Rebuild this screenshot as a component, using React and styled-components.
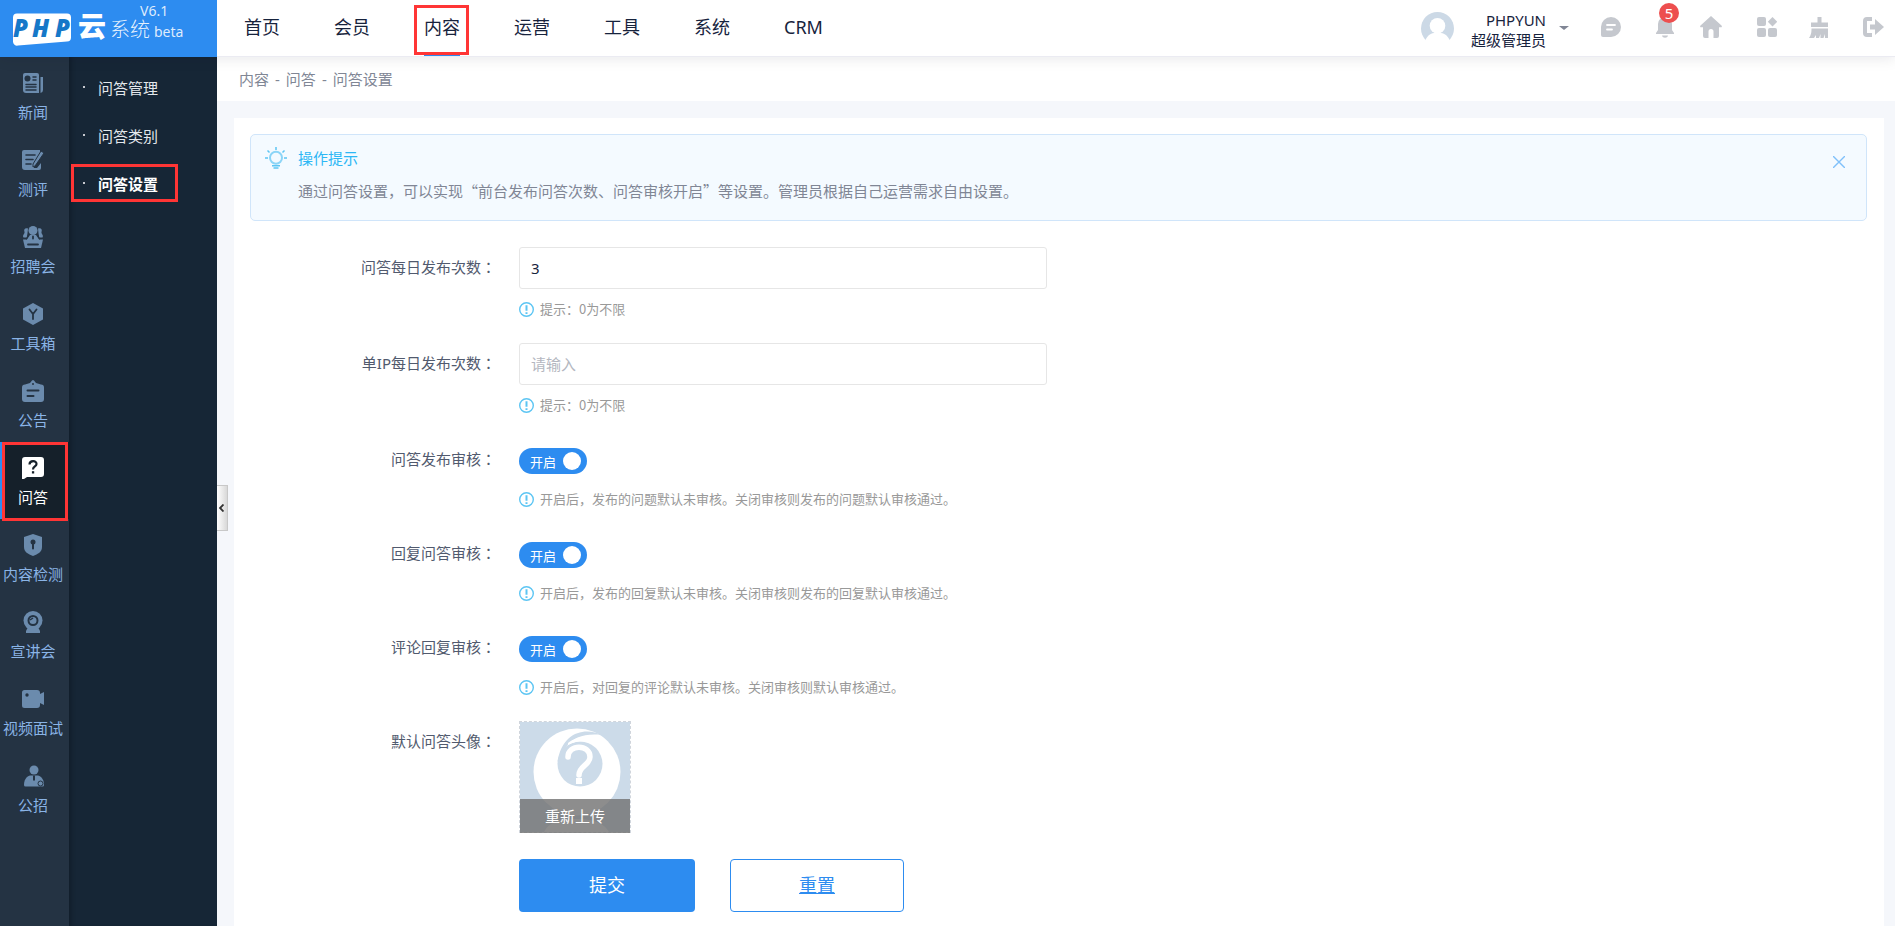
import React, { useState } from "react";
import styled, { createGlobalStyle, css } from "styled-components";

const sans = `"Noto Sans", "Noto Sans CJK SC", sans-serif`;
const cjk = `"Noto Sans CJK SC", "Noto Sans", sans-serif`;
// the TC face centres the full-width colon
const labelFont = `"Noto Sans", "Noto Sans CJK TC", sans-serif`;

const topMenu = ["首页", "会员", "内容", "运营", "工具", "系统", "CRM"];

const subMenu = ["问答管理", "问答类别", "问答设置"];

const crumbs = ["内容", "-", "问答", "-", "问答设置"];

const railMenu = [
  { name: "新闻", icon: "news" },
  { name: "测评", icon: "exam" },
  { name: "招聘会", icon: "fair" },
  { name: "工具箱", icon: "box" },
  { name: "公告", icon: "notice" },
  { name: "问答", icon: "ask" },
  { name: "内容检测", icon: "shield" },
  { name: "宣讲会", icon: "camera" },
  { name: "视频面试", icon: "video" },
  { name: "公招", icon: "person" },
];

const switches = [
  {
    id: "askCheck",
    label: "问答发布审核：",
    hint: "开启后，发布的问题默认未审核。关闭审核则发布的问题默认审核通过。",
  },
  {
    id: "answerCheck",
    label: "回复问答审核：",
    hint: "开启后，发布的回复默认未审核。关闭审核则发布的回复默认审核通过。",
  },
  {
    id: "commentCheck",
    label: "评论回复审核：",
    hint: "开启后，对回复的评论默认未审核。关闭审核则默认审核通过。",
  },
];

// icons of the left rail, "hole" is the colour behind the icon
const RailIcon = ({ type, hole }) => {
  const line = { stroke: hole, strokeWidth: 2, fill: "none", strokeLinecap: "round" };
  const shapes = {
    news: (
      <>
        <path d="M3 1h12a2 2 0 0 1 2 2v18H4a3 3 0 0 1-3-3V3a2 2 0 0 1 2-2z" />
        <path d="M18.500 5H21v13a3 3 0 0 1-2.500 3z" />
        <circle cx="5.500" cy="6.500" r="3" fill={hole} />
        <path {...line} strokeWidth="1.500" d="M11 5h3M11 8h3M4 12.500h10M4 15h10M4 18h10" />
      </>
    ),
    exam: (
      <>
        <path d="M2 1h16v7l-6 8v3h3l4-5v5a2 2 0 0 1-2 2H3a3 3 0 0 1-3-3V3a2 2 0 0 1 2-2z" />
        <path d="M19 2l3 2-9 13-2 1 0-3z" stroke={hole} strokeWidth="1" />
        <path {...line} strokeWidth="1.600" d="M4 6h9M4 10.500h7M4 15h5" />
      </>
    ),
    fair: (
      <>
        <path d="M6 2.500c-3-1-4.500 1-3.500 3.500C3 8 0 9 1.500 11.500H5zM16 2.500c3-1 4.500 1 3.500 3.500-.5 2 2.500 3 1 5.500H17z" />
        <circle cx="11" cy="4.500" r="4.500" />
        <path d="M8 9h6l3.500 5h-13z" />
        <path d="M1 13.500h20L19 22H3z" />
        <path {...line} strokeWidth="1.200" d="M6.500 8.500L4.500 13M15.500 8.500l2 4.500" />
        <path {...line} strokeWidth="1.800" d="M11 10.500v2M6 18.500h10" />
      </>
    ),
    box: (
      <>
        <path d="M11 0l10 5.500v11L11 22 1 16.500v-11z" />
        <path {...line} strokeWidth="1.800" d="M7.500 6.500L11 11l3.500-4.500M11 11v5" />
      </>
    ),
    notice: (
      <>
        <path d="M8 3l2-2.500a1.500 1.500 0 0 1 2 0L14 3l5 1.500a3 3 0 0 1 3 3V19a3 3 0 0 1-3 3H3a3 3 0 0 1-3-3V7.500a3 3 0 0 1 3-3z" />
        <path {...line} d="M5.500 10.500h11M5.500 16h6" />
        <circle cx="11" cy="4" r="1" fill={hole} />
      </>
    ),
    ask: (
      <>
        <path d="M3 0h16a3 3 0 0 1 3 3v14a3 3 0 0 1-3 3H5l-3 2H0V3a3 3 0 0 1 3-3z" />
        <path {...line} strokeWidth="2.200" strokeLinecap="butt" d="M7.500 7.500C7.500 3 14.800 3 14.500 7c0 2.500-3.500 2.500-3.500 5.500" />
        <rect x="9.900" y="14.200" width="2.300" height="2.300" fill={hole} />
      </>
    ),
    shield: (
      <>
        <path d="M11 0l9 3v10c0 5-4 7-9 9-5-2-9-4-9-9V3z" />
        <circle cx="11" cy="8" r="2.500" fill={hole} />
        <path {...line} d="M11 8v6.500" />
      </>
    ),
    camera: (
      <>
        <circle cx="11" cy="9.500" r="9.500" />
        <path d="M6 16h10l2 4v2H4v-2z" />
        <circle cx="11" cy="9.500" r="4.500" fill="none" stroke={hole} strokeWidth="2" />
        <path d="M8 9l3-2" stroke={hole} strokeWidth="1.500" />
      </>
    ),
    video: (
      <>
        <path d="M2.500 2H15a3 3 0 0 1 3 3v1l4-2v13l-4-2v2a3 3 0 0 1-3 3H2.500A2.500 2.500 0 0 1 0 17.500v-13A2.500 2.500 0 0 1 2.500 2z" />
        <circle cx="5" cy="7" r="1.700" fill={hole} />
      </>
    ),
    person: (
      <>
        <circle cx="12" cy="5" r="4.500" />
        <path d="M8 10.500h8c4 1 6 5 6 9.500a1.500 1.500 0 0 1-1.500 1.500h-17A1.500 1.500 0 0 1 2 20c0-4.500 2-8.500 6-9.500z" />
        <path {...line} strokeLinecap="butt" d="M12 10.500v5" />
        <circle cx="18.500" cy="18.500" r="2.500" fill="none" stroke={hole} strokeWidth="1" />
      </>
    ),
  };
  return (
    <svg width="22" height="22" viewBox="0 0 22 22" fill="currentColor" aria-hidden="true">
      {shapes[type]}
    </svg>
  );
};

const ChatIcon = () => (
  <svg width="20" height="20" viewBox="0 0 20 20" fill="currentColor">
    <path d="M10 0a10 10 0 0 1 0 20H2a2 2 0 0 1-2-2v-8A10 10 0 0 1 10 0z" />
    <path d="M6 8h8M6 12.500h5" stroke="#fff" strokeWidth="1.800" strokeLinecap="round" />
  </svg>
);

const BellIcon = () => (
  <svg width="18" height="22" viewBox="0 0 18 22" fill="currentColor">
    <path d="M9 1a7 7 0 0 1 7 7v6l2 3v1H0v-1l2-3V8a7 7 0 0 1 7-7z" />
    <path d="M6 19.500h6c-.5 3-5.500 3-6 0z" />
  </svg>
);

const HomeIcon = () => (
  <svg width="22" height="22" viewBox="0 0 22 22" fill="currentColor">
    <path d="M11 0l10.500 9.500c.8.900.3 1.800-.8 1.800H19V20a2 2 0 0 1-2 2h-3.500v-6.500a2.500 2.500 0 0 0-5 0V22H5a2 2 0 0 1-2-2v-8.700H1.300C.2 11.300-.3 10.400.5 9.500z" />
  </svg>
);

const GridIcon = () => (
  <svg width="20" height="20" viewBox="0 0 20 20" fill="currentColor">
    <rect width="9" height="9" rx="2" />
    <rect y="11" width="9" height="9" rx="2" />
    <rect x="11" y="11" width="9" height="9" rx="2" />
    <path d="M15.500 0L20.200 4.700 15.500 9.400 10.800 4.700z" strokeLinejoin="round" />
  </svg>
);

const BroomIcon = () => (
  <svg width="20" height="22" viewBox="0 0 20 22" fill="currentColor">
    <path d="M8.500 1h4v5.500H19V11H2V6.500h6.500z" />
    <path d="M2.500 12.500H19V22h-3v-4l-1.500 4h-3v-4L10 22H7v-3l-2 3H0c2-3 2.500-5 2.500-9.500z" />
  </svg>
);

const LogoutIcon = () => (
  <svg width="21" height="20" viewBox="0 0 21 20" fill="none">
    <path d="M9 2H4a2 2 0 0 0-2 2v12a2 2 0 0 0 2 2h5" stroke="currentColor" strokeWidth="4" />
    <path d="M7 7.500h5V2l9 8-9 8v-5.500H7z" fill="currentColor" />
  </svg>
);

// $gap is the space to the tool on the left
const tools = [
  { name: "消息", Icon: ChatIcon, gap: 32 },
  { name: "通知", Icon: BellIcon, gap: 35, badge: 5 },
  { name: "主页", Icon: HomeIcon, gap: 26 },
  { name: "应用", Icon: GridIcon, gap: 35 },
  { name: "清理", Icon: BroomIcon, gap: 32 },
  { name: "退出", Icon: LogoutIcon, gap: 34 },
];

const Logo = () => (
  <svg width="217" height="57" viewBox="0 0 217 57" role="img" aria-label="PHP云系统">
    <path d="M17 13.500h50a4 4 0 0 1 4 4v20a4 4 0 0 1-4 4l-49 4a4 4 0 0 1-5-4V17.500a4 4 0 0 1 4-4z" fill="#fff" />
    <g fill="#1678c8" fontFamily="Noto Sans" fontWeight="900" fontStyle="italic" fontSize="24">
      <text x="13" y="37">P</text>
      <text x="32" y="37">H</text>
      <text x="55" y="37">P</text>
    </g>
    <g fill="#fff" fontFamily="Noto Sans CJK SC">
      <text x="78" y="37" fontSize="28" fontWeight="900">云</text>
      <text x="110" y="37" fontSize="20" fontWeight="300" fillOpacity="0.900">系统</text>
    </g>
    <g fill="#fff" fillOpacity="0.850" fontFamily="Noto Sans" fontSize="14">
      <text x="140" y="16">V6.1</text>
      <text x="154" y="37">beta</text>
    </g>
  </svg>
);

const HintIcon = () => (
  <svg width="15" height="15" viewBox="0 0 15 15" fill="none" stroke="#5cc5f3">
    <circle cx="7.500" cy="7.500" r="6.800" strokeWidth="1.400" />
    <path d="M7.500 3.200v5.600M7.500 10.200v1.800" strokeWidth="2" />
  </svg>
);

const BulbIcon = () => (
  <svg width="22" height="22" viewBox="0 0 22 22" fill="none" stroke="#5cc5f3" strokeWidth="1.500">
    <circle cx="11" cy="10.800" r="6" stroke="#8cd5f7" strokeWidth="2" />
    <path d="M11 0v3M0 11h3M19 11h3M2.500 3.500l2 2M19.500 3.500l-2 2M7 18.700h8M8.500 21h5" />
  </svg>
);

const Avatar = () => (
  <svg width="33" height="33" viewBox="0 0 33 33">
    <circle cx="16.500" cy="16.500" r="16.500" fill="#ccd9e6" />
    <path d="M4 29c2-5 5-7.500 9-8h7c4 .5 7 3 9 8l2 4H2z" fill="#fff" />
    <circle cx="16.500" cy="13.800" r="7.800" fill="#fff" />
  </svg>
);

const AskPicture = () => (
  <svg width="110" height="110" viewBox="0 0 110 110">
    <rect width="110" height="110" fill="#ccdbe9" />
    <circle cx="57" cy="50" r="43.500" fill="#fff" />
    <circle cx="60" cy="42" r="22.500" fill="#ccdbe9" />
    <path d="M82 13C66 5 42 9 37.500 40L46 25C53 15 66 11 82 13z" fill="#ccdbe9" />
    <path d="M48 21c6-5 16-8 25-5l-1 5c-8-3-17-2-24 2z" fill="#fff" />
    <path
      d="M48 35c0-13 22-13 22 0 0 8-11 9-11 18"
      fill="none"
      stroke="#fff"
      strokeWidth="5.500"
      strokeLinecap="round"
    />
    <rect x="56" y="56" width="6" height="6" fill="#fff" />
    <path d="M24 110c4-8 12-13 32-13s28 5 33 13z" fill="#fff" />
  </svg>
);

const App = () => {
  const [dayNum, setDayNum] = useState("3");
  const [ipNum, setIpNum] = useState("");
  const [checks, setChecks] = useState({ askCheck: true, answerCheck: true, commentCheck: true });
  const [tipOpen, setTipOpen] = useState(true);

  const toggleCheck = (id) => {
    setChecks({ ...checks, [id]: !checks[id] });
  };

  const resetForm = (e) => {
    e.preventDefault();
    setDayNum("3");
    setIpNum("");
    setChecks({ askCheck: true, answerCheck: true, commentCheck: true });
  };

  return (
    <Page>
      <GlobalStyle />
      <Header>
        <Logo />
        <TopBar>
          <TopNav>
            {topMenu.map((item) => (
              <TopLink key={item} href="#" $active={item === "内容"}>
                {item}
              </TopLink>
            ))}
          </TopNav>
          <UserButton type="button">
            <Avatar />
            <UserName>
              <span>PHPYUN</span>
              <span>超级管理员</span>
            </UserName>
            <Caret />
          </UserButton>
          {tools.map(({ name, Icon, gap, badge }) => (
            <ToolButton key={name} type="button" aria-label={name} $gap={gap}>
              <Icon />
              {badge && <Badge>{badge}</Badge>}
            </ToolButton>
          ))}
        </TopBar>
      </Header>

      <Body>
        <Rail>
          {railMenu.map(({ name, icon }) => (
            <RailLink key={name} href="#" $active={name === "问答"}>
              <RailIcon type={icon} hole={name === "问答" ? "#15202a" : "#243343"} />
              {name}
            </RailLink>
          ))}
        </Rail>
        <SubNav>
          {subMenu.map((item) => (
            <SubLink key={item} href="#" $active={item === "问答设置"}>
              {item}
            </SubLink>
          ))}
          <FoldButton type="button" aria-label="收起菜单">
            <svg width="5" height="8" viewBox="0 0 5 8" fill="none" stroke="#333" strokeWidth="1.800">
              <path d="M4.500 .5L1 4l3.500 3.500" />
            </svg>
          </FoldButton>
        </SubNav>

        <Main>
          <Breadcrumb>
            {crumbs.map((text, i) => (
              <span key={i}>{text}</span>
            ))}
          </Breadcrumb>
          <Card>
            {tipOpen && (
              <Tip>
                <BulbIcon />
                <TipText>
                  <h2>操作提示</h2>
                  <p>通过问答设置，可以实现“前台发布问答次数、问答审核开启”等设置。管理员根据自己运营需求自由设置。</p>
                </TipText>
                <CloseButton type="button" aria-label="关闭" onClick={() => setTipOpen(false)}>
                  <svg width="12" height="12" viewBox="0 0 12 12" stroke="#7fc0fa" strokeWidth="1.400">
                    <path d="M0 0l12 12M12 0L0 12" />
                  </svg>
                </CloseButton>
              </Tip>
            )}
            <form onSubmit={(e) => e.preventDefault()} onReset={resetForm}>
              <Row>
                <Label htmlFor="dayNum">问答每日发布次数：</Label>
                <Field>
                  <Input id="dayNum" placeholder="请输入" value={dayNum} onChange={(e) => setDayNum(e.target.value)} />
                  <Hint>
                    <HintIcon />
                    提示：0为不限
                  </Hint>
                </Field>
              </Row>
              <Row>
                <Label htmlFor="ipNum">单IP每日发布次数：</Label>
                <Field>
                  <Input id="ipNum" placeholder="请输入" value={ipNum} onChange={(e) => setIpNum(e.target.value)} />
                  <Hint>
                    <HintIcon />
                    提示：0为不限
                  </Hint>
                </Field>
              </Row>
              {switches.map(({ id, label, hint }) => (
                <Row key={id}>
                  <Label htmlFor={id}>{label}</Label>
                  <SwitchField>
                    <Switch $on={checks[id]}>
                      <input type="checkbox" id={id} checked={checks[id]} onChange={() => toggleCheck(id)} />
                      {checks[id] ? "开启" : "关闭"}
                      <Knob />
                    </Switch>
                    <Hint>
                      <HintIcon />
                      {hint}
                    </Hint>
                  </SwitchField>
                </Row>
              ))}
              <Row>
                <Label as="span">默认问答头像：</Label>
                <Upload type="button">
                  <AskPicture />
                  <UploadText>重新上传</UploadText>
                </Upload>
              </Row>
              <Actions>
                <Submit type="submit">提交</Submit>
                <Reset type="reset">重置</Reset>
              </Actions>
            </form>
          </Card>
        </Main>
      </Body>
    </Page>
  );
};

const GlobalStyle = createGlobalStyle`
  *, *::before, *::after {
    box-sizing: border-box;
  }
  body {
    margin: 0;
    background: #f5f7fb;
    font-family: ${cjk};
    font-size: 15px;
  }
  h2, p {
    margin: 0;
    font-size: 15px;
    font-weight: 400;
  }
  a {
    text-decoration: none;
  }
  button, input {
    font-family: inherit;
    font-size: 15px;
  }
  button {
    border: none;
    padding: 0;
    background: none;
    cursor: pointer;
  }
  svg {
    display: block;
    flex: none;
  }
`;

// red frame round the marked menu entries
const marked = css`
  position: relative;
  &::after {
    content: "";
    position: absolute;
    border: 3px solid #ff3535;
  }
`;

const Page = styled.div`
  min-height: 100vh;
  display: flex;
  flex-direction: column;
`;

const Header = styled.header`
  position: relative;
  z-index: 2;
  display: flex;
  background: #2d8cf0;
  box-shadow: 0 1px 14px rgba(0, 21, 41, 0.1);
`;

const TopBar = styled.div`
  flex: 1;
  display: flex;
  align-items: center;
  height: 57px;
  padding: 0 11px 0 27px;
  background: #fff;
  border-bottom: 1px solid #ebebf2;
`;

const TopNav = styled.nav`
  flex: 1;
  display: flex;
  gap: 54px;
`;

const TopLink = styled.a`
  height: 56px;
  line-height: 54px;
  font-family: ${sans};
  font-size: 18px;
  color: #17233d;
  ${({ $active }) =>
    $active &&
    css`
      ${marked}
      border-bottom: 2px solid #2d8cf0;
      &::after {
        inset: 5px -9px -1px -10px;
      }
    `}
`;

const UserButton = styled.button`
  display: flex;
  align-items: center;
  font-family: ${sans};
  color: #17233d;
`;

const UserName = styled.span`
  display: flex;
  flex-direction: column;
  margin: 4px 13px 0 17px;
  text-align: right;
  line-height: 20px;
`;

const Caret = styled.span`
  border: 5px solid transparent;
  border-bottom: none;
  border-top: 4px solid #808695;
`;

const ToolButton = styled.button`
  position: relative;
  margin: 0 0 2px ${({ $gap }) => $gap}px;
  color: #c5c8ce;
`;

const Badge = styled.span`
  position: absolute;
  top: -13px;
  left: 3px;
  width: 20px;
  height: 20px;
  line-height: 20px;
  border-radius: 50%;
  background: #ed4f4f;
  color: #fff;
  font-family: ${sans};
  text-align: center;
`;

const Body = styled.div`
  flex: 1;
  display: flex;
`;

const Rail = styled.nav`
  width: 69px;
  flex: none;
  background: #243343;
`;

const RailLink = styled.a`
  height: 77px;
  padding: 15px 3px 0 0;
  display: flex;
  flex-direction: column;
  align-items: center;
  gap: 8px;
  line-height: 20px;
  white-space: nowrap;
  color: #8ab4e6;
  svg {
    color: #6b8bad;
  }
  ${({ $active }) =>
    $active &&
    css`
      ${marked}
      background: #15202a;
      box-shadow: inset 2px 0 #2d8cf0;
      color: #fff;
      svg {
        color: #fff;
      }
      &::after {
        inset: 0 1px -2px 2px;
      }
    `}
`;

const SubNav = styled.nav`
  position: relative;
  width: 148px;
  flex: none;
  padding-top: 6px;
  background: #162636;
  box-shadow: inset 5px 0 5px -3px rgba(0, 0, 0, 0.25);
`;

const SubLink = styled.a`
  display: flex;
  align-items: center;
  gap: 13px;
  height: 48px;
  padding-left: 14px;
  color: #e4e8ec;
  &::before {
    content: "";
    width: 2px;
    height: 2px;
    background: #c5c8ce;
  }
  ${({ $active }) =>
    $active &&
    css`
      ${marked}
      color: #fff;
      font-weight: 700;
      &::after {
        inset: 5px 39px 5px 2px;
      }
    `}
`;

const FoldButton = styled.button`
  position: absolute;
  top: 428px;
  left: 100%;
  width: 11px;
  height: 46px;
  padding-left: 2px;
  border: 1px solid #c8c8c8;
  border-left: none;
  background: linear-gradient(90deg, #fff, #d8d8d8);
`;

const Main = styled.main`
  flex: 1;
  min-width: 0;
  display: flex;
  flex-direction: column;
`;

const Breadcrumb = styled.div`
  display: flex;
  gap: 6px;
  height: 44px;
  line-height: 44px;
  padding-left: 22px;
  background: #fff;
  font-family: ${sans};
  color: #808695;
`;

const Card = styled.section`
  flex: 1;
  margin: 17px 11px 0 17px;
  padding: 16px 17px 8px 16px;
  background: #fff;
`;

const Tip = styled.div`
  display: flex;
  align-items: flex-start;
  gap: 11px;
  padding: 12px 21px 17px 14px;
  margin-bottom: 26px;
  border: 1px solid #d0e5fa;
  border-radius: 5px;
  background: #f4faff;
`;

const TipText = styled.div`
  flex: 1;
  color: #808695;
  h2 {
    line-height: 22px;
    margin-bottom: 10px;
    color: #2db7f5;
  }
  p {
    line-height: 24px;
  }
`;

const CloseButton = styled.button`
  margin-top: 9px;
`;

const Row = styled.div`
  display: flex;
  align-items: flex-start;
  gap: 23px;
  margin-bottom: 23px;
`;

const Label = styled.label`
  width: 246px;
  flex: none;
  line-height: 41px;
  text-align: right;
  font-family: ${labelFont};
  color: #515a6e;
`;

const Field = styled.div`
  flex: 1;
  display: flex;
  flex-direction: column;
  gap: 9px;
  max-width: 528px;
`;

const SwitchField = styled.div`
  flex: 1;
  display: flex;
  flex-direction: column;
  align-items: flex-start;
  gap: 14px;
  padding-top: 9px;
`;

const Input = styled.input`
  width: 100%;
  height: 42px;
  padding: 0 11px;
  border: 1px solid #e6e6e6;
  border-radius: 3px;
  font-family: ${sans};
  color: #17233d;
  &::placeholder {
    color: #b4b7bf;
  }
`;

const Hint = styled.p`
  display: flex;
  align-items: center;
  gap: 6px;
  line-height: 22px;
  font-size: 13px;
  color: #999;
`;

const Switch = styled.label`
  position: relative;
  display: flex;
  align-items: center;
  justify-content: space-between;
  width: 68px;
  height: 26px;
  padding: 0 6px 0 11px;
  border-radius: 13px;
  background: ${({ $on }) => ($on ? "#2d8cf0" : "#c5c8ce")};
  color: #fff;
  font-family: ${sans};
  font-size: 13px;
  cursor: pointer;
  input {
    position: absolute;
    inset: 0;
    margin: 0;
    opacity: 0;
  }
`;

const Knob = styled.span`
  width: 18px;
  height: 18px;
  border-radius: 50%;
  background: #fff;
`;

const Upload = styled.button`
  position: relative;
  width: 112px;
  height: 112px;
  border: 1px dashed #d0d5dc;
`;

const UploadText = styled.span`
  position: absolute;
  inset: auto 0 -1px;
  line-height: 34px;
  background: rgba(112, 112, 112, 0.8);
  color: #fff;
`;

const Actions = styled.div`
  display: flex;
  gap: 35px;
  margin-top: 26px;
  padding-left: 269px;
`;

const Submit = styled.button`
  width: 176px;
  height: 53px;
  padding-bottom: 3px;
  border-radius: 4px;
  background: #2d8cf0;
  color: #fff;
  font-size: 18px;
`;

const Reset = styled(Submit)`
  width: 174px;
  border: 1px solid #2d8cf0;
  background: #fff;
  color: #2d8cf0;
  text-decoration: underline;
`;

export default App;
